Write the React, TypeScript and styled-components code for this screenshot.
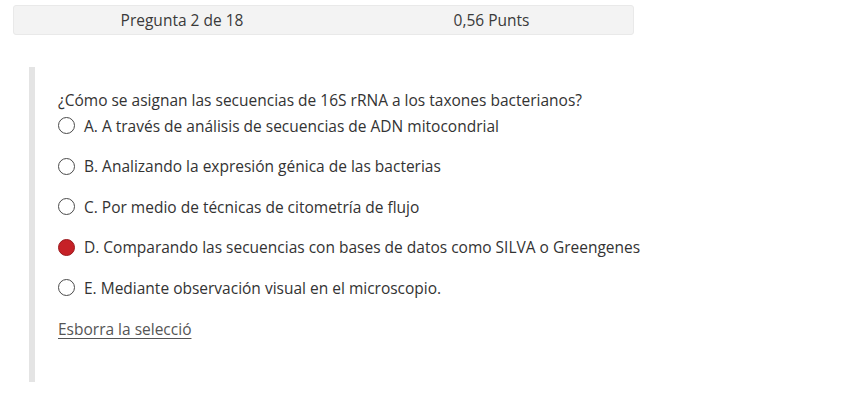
import React from "react";
import styled, { createGlobalStyle } from "styled-components";

const Global = createGlobalStyle`
  html, body { margin: 0; padding: 0; background: #ffffff; }
  body { font-family: "Open Sans", "Noto Sans", sans-serif; color: #333333; }
`;

const Page = styled.div`
  padding: 5px 0 0 13px;
`;

const InfoBar = styled.div`
  box-sizing: border-box;
  width: 621px;
  height: 30px;
  display: grid;
  grid-template-columns: 336px 1fr;
  align-items: center;
  background: #f3f3f3;
  border: 1px solid #e9e9e9;
  border-radius: 3px;
  font-size: 15.5px;
  color: #3a3a3a;
`;

const InfoCell = styled.div`
  text-align: center;
`;

const QuestionBlock = styled.div`
  box-sizing: border-box;
  margin: 32px 0 0 16px;
  height: 315px;
  border-left: 6px solid #e4e4e4;
  padding: 22px 0 0 23px;
  font-size: 15.5px;
  line-height: 22px;
`;

const QuestionText = styled.div`
  color: #333333;
`;

const Options = styled.div`
  display: flex;
  flex-direction: column;
  gap: 18.5px;
  margin-top: 3.5px;
`;

const Option = styled.label`
  display: flex;
  align-items: center;
  gap: 9px;
  height: 22px;
  color: #333333;
`;

const Radio = styled.span<{ $checked?: boolean }>`
  box-sizing: border-box;
  width: 17px;
  height: 17px;
  border-radius: 50%;
  border: 1.5px solid ${(p) => (p.$checked ? "#9a1a1e" : "#4a4a4a")};
  background: ${(p) => (p.$checked ? "#c62127" : "#ffffff")};
  flex: none;
`;

const ClearLink = styled.a`
  display: inline-block;
  margin-top: 19px;
  color: #555555;
  text-decoration: underline;
  text-underline-offset: 3px;
  cursor: pointer;
`;

const options = [
  "A. A través de análisis de secuencias de ADN mitocondrial",
  "B. Analizando la expresión génica de las bacterias",
  "C. Por medio de técnicas de citometría de flujo",
  "D. Comparando las secuencias con bases de datos como SILVA o Greengenes",
  "E. Mediante observación visual en el microscopio.",
];

export default function App() {
  return (
    <>
      <Global />
      <Page>
        <InfoBar>
          <InfoCell>Pregunta 2 de 18</InfoCell>
          <InfoCell>0,56 Punts</InfoCell>
        </InfoBar>
        <QuestionBlock>
          <QuestionText>
            ¿Cómo se asignan las secuencias de 16S rRNA a los taxones bacterianos?
          </QuestionText>
          <Options>
            {options.map((o, i) => (
              <Option key={i}>
                <Radio $checked={i === 3} />
                {o}
              </Option>
            ))}
          </Options>
          <ClearLink>Esborra la selecció</ClearLink>
        </QuestionBlock>
      </Page>
    </>
  );
}
